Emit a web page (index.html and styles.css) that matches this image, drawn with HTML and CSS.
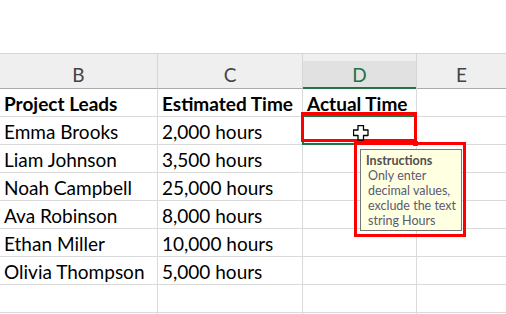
FILE: index.html
```html
<!DOCTYPE html>
<html>
<head>
<meta charset="utf-8">
<link rel="stylesheet" href="styles.css">
</head>
<body>
<div class="page">
  <div class="topbar"></div>
  <div class="sheet">
    <div class="colhead">B</div>
    <div class="colhead">C</div>
    <div class="colhead colhead-sel"><div class="colhead-sel-inner">D</div></div>
    <div class="colhead colhead-last">E</div>

    <div class="cell bold">Project Leads</div>
    <div class="cell bold">Estimated Time</div>
    <div class="cell bold">Actual Time</div>
    <div class="cell last"></div>

    <div class="cell">Emma Brooks</div>
    <div class="cell">2,000 hours</div>
    <div class="cell"></div>
    <div class="cell last"></div>

    <div class="cell">Liam Johnson</div>
    <div class="cell">3,500 hours</div>
    <div class="cell"></div>
    <div class="cell last"></div>

    <div class="cell">Noah Campbell</div>
    <div class="cell">25,000 hours</div>
    <div class="cell"></div>
    <div class="cell last"></div>

    <div class="cell">Ava Robinson</div>
    <div class="cell">8,000 hours</div>
    <div class="cell"></div>
    <div class="cell last"></div>

    <div class="cell">Ethan Miller</div>
    <div class="cell">10,000 hours</div>
    <div class="cell"></div>
    <div class="cell last"></div>

    <div class="cell">Olivia Thompson</div>
    <div class="cell">5,000 hours</div>
    <div class="cell"></div>
    <div class="cell last"></div>

    <div class="cell"></div>
    <div class="cell"></div>
    <div class="cell"></div>
    <div class="cell last"></div>

    <div class="cell"></div>
    <div class="cell"></div>
    <div class="cell"></div>
    <div class="cell last"></div>
  </div>

  <div class="active-cell"><span class="fill-handle"></span></div>
  <div class="mark mark-cell"></div>
  <div class="tooltip">
    <div class="tooltip-title">Instructions</div>
    <div class="tooltip-body">Only enter<br>decimal values,<br>exclude the text<br>string Hours</div>
  </div>
  <div class="mark mark-tip"></div>
  <svg class="cursor" width="16" height="16" viewBox="0 0 16 16">
    <path d="M5 0.5 H10.5 V5 H15 V10.5 H10.5 V15 H5 V10.5 H0.5 V5 H5 Z" fill="#fff" stroke="#000" stroke-width="1.3" stroke-linejoin="round"/>
  </svg>
</div>
</body>
</html>
```
FILE: styles.css
```css
html, body {
  margin: 0;
  padding: 0;
  background: #fff;
}
.page {
  position: relative;
  width: 506px;
  height: 314px;
  overflow: hidden;
  font-family: "Lato", "Liberation Sans", sans-serif;
}
.topbar {
  height: 53px;
  background: #fff;
}
.sheet {
  display: grid;
  grid-template-columns: 158px 145px 114px 89px;
  border-top: 1px solid #d6d6d6;
}
.colhead {
  box-sizing: border-box;
  height: 35px;
  padding-top: 9px;
  background: #efefef;
  border-right: 1px solid #d6d6d6;
  border-bottom: 1px solid #ababab;
  color: #444;
  font-size: 19px;
  line-height: 23px;
  text-align: center;
}
.colhead-last {
  border-right: none;
}
.colhead.colhead-sel {
  padding-top: 7px;
  border-bottom: none;
}
.colhead-sel-inner {
  height: 28px;
  box-sizing: border-box;
  background: #e1e1e1;
  border-bottom: 2px solid #217346;
  color: #217346;
  padding-top: 2px;
}
.cell {
  height: 28px;
  box-sizing: border-box;
  border-right: 1px solid #dadada;
  border-bottom: 1px solid #dadada;
  padding: 2px 0 0 4px;
  font-size: 19px;
  line-height: 25px;
  color: #000;
  white-space: nowrap;
  overflow: hidden;
}
.cell.last {
  border-right: none;
}
.bold {
  font-weight: 700;
}
.active-cell {
  position: absolute;
  left: 302px;
  top: 115px;
  width: 115px;
  height: 30px;
  box-sizing: border-box;
  border: 2px solid #217346;
}
.fill-handle {
  position: absolute;
  right: -4px;
  bottom: -4px;
  width: 5px;
  height: 5px;
  background: #217346;
  border: 1px solid #fff;
}
.mark {
  position: absolute;
  box-sizing: border-box;
  border: 3px solid #ff0000;
}
.mark-cell {
  left: 301px;
  top: 112px;
  width: 116px;
  height: 30px;
}
.mark-tip {
  left: 354px;
  top: 142px;
  width: 112px;
  height: 95px;
}
.tooltip {
  position: absolute;
  left: 360px;
  top: 149px;
  width: 102px;
  height: 82px;
  box-sizing: border-box;
  background: #ffffe1;
  border: 1px solid #767676;
  padding: 3px 0 0 5px;
  font-size: 12.5px;
  line-height: 15px;
  white-space: nowrap;
}
.tooltip-title {
  font-weight: 700;
  color: #4f4f4f;
}
.tooltip-body {
  color: #5a5a72;
  padding-left: 2px;
}
.cursor {
  position: absolute;
  left: 353px;
  top: 125px;
}
```
